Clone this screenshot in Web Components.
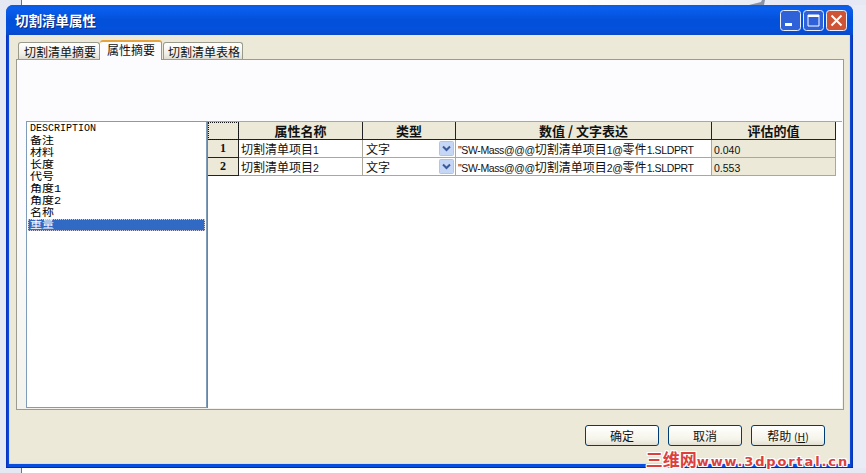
<!DOCTYPE html>
<html>
<head>
<meta charset="utf-8">
<title>切割清单属性</title>
<style>
  html, body { margin: 0; padding: 0; }
  body {
    width: 866px;
    height: 473px;
    overflow: hidden;
    background: #e4e8f2;
    font-family: "Liberation Sans", "Noto Sans CJK SC", sans-serif;
    font-size: 12px;
  }
</style>
</head>
<body>
<desk-top>
  <xp-window title="切割清单属性">
    <xp-tabs>
      <prop-list></prop-list>
      <prop-grid></prop-grid>
    </xp-tabs>
    <xp-button slot="buttons">确定</xp-button>
    <xp-button slot="buttons">取消</xp-button>
    <xp-button slot="buttons">帮助 <span style="font-size:10.5px">(<u>H</u>)</span></xp-button>
  </xp-window>
</desk-top>

<script>
// ascii runs get their own smaller font, the cjk stays at 12px
const latin = (s, cls) => s.replace(/[\x21-\x7e]+/g, m => `<span class="${cls}">${m}</span>`);

class DeskTop extends HTMLElement {
  constructor() {
    super();
    this.attachShadow({mode: 'open'}).innerHTML = `
      <style>
        :host { display: block; position: relative; width: 866px; height: 473px; }
        .back { position: absolute; left: 21px; right: 0; top: 0; bottom: 0;
          background: linear-gradient(90deg, #fff 65%, #e6e9f3 92%); border-left: 1px solid #70737c; }
        .side { position: absolute; right: 0; top: 5px; width: 13px; height: 463px; background: #e9ecf5; }
        .stroke { position: absolute; left: 748px; top: 0; }
        .mark { position: absolute; right: 17px; top: 449px; white-space: nowrap; color: #dc3f3c;
          font: bold 13px/20px "DejaVu Sans", sans-serif; letter-spacing: 1.85px;
          text-shadow: 1px 0 #fff, -1px 0 #fff, 0 1px #fff, 0 -1px #fff, 1px 1px #fff, -1px -1px #fff, 1px -1px #fff, -1px 1px #fff; }
        .mark b { font: bold 17px/20px "Noto Sans CJK SC", sans-serif; letter-spacing: 0; }
        .win { position: relative; padding: 5px 0 0 6px; }
      </style>
      <div class="back"></div>
      <div class="side"></div>
      <svg class="stroke" width="18" height="6" viewBox="0 0 18 6"><path d="M1 5L13 2l1-2h3l-1 5z" fill="#8a93a8"/></svg>
      <div class="win"><slot></slot></div>
      <div class="mark"><b>三维网</b>www.3dportal.cn</div>
    `;
  }
}

class XpWindow extends HTMLElement {
  constructor() {
    super();
    this.attachShadow({mode: 'open'}).innerHTML = `
      <style>
        :host { display: block; width: 847px; height: 463px; }
        .frame { height: 100%; box-sizing: border-box; display: flex; flex-direction: column;
          border-radius: 7px 7px 0 0; overflow: hidden;
          background: linear-gradient(90deg, #0a2fb8, #0a4ee0 3px, #0a4ee0 calc(100% - 3px), #0a2fa8);
          border-bottom: 1px solid #0a2a9c; }
        .bar { height: 30px; flex: none; display: flex; align-items: center; padding: 0 6px 0 9px;
          background: linear-gradient(#0a5be0 0, #0a5fee 12%, #0350da 50%, #0351dc 80%, #0a48c8 100%); }
        .title { flex: 1; color: #fff; font: bold 13.5px "Noto Sans CJK SC", sans-serif;
          text-shadow: 1px 1px #0a2a80; }
        .ctl { display: flex; gap: 2px; }
        .ctl svg { display: block; }
        .body { flex: 1; background: #ece9d8; margin: 0 3px 3px; padding: 5px 5px 0 6px;
          display: flex; flex-direction: column; min-height: 0; border: 1px solid #d8dcec; border-top: 0; }
        .foot { display: flex; justify-content: flex-end; gap: 9px; padding: 15px 19px 0 0; }
      </style>
      <div class="frame">
        <div class="bar">
          <span class="title"></span>
          <div class="ctl">
            <svg width="21" height="21" viewBox="0 0 21 21">
              <rect x=".5" y=".5" width="20" height="20" rx="3" fill="#2f62d8" stroke="#e8eefc"/>
              <rect x="5" y="13" width="7" height="3" fill="#fff"/>
            </svg>
            <svg width="21" height="21" viewBox="0 0 21 21">
              <rect x=".5" y=".5" width="20" height="20" rx="3" fill="#2f62d8" stroke="#e8eefc"/>
              <path d="M5 5h11v11H5z" fill="none" stroke="#fff"/><path d="M5 6h11" stroke="#fff" stroke-width="2"/>
            </svg>
            <svg width="21" height="21" viewBox="0 0 21 21">
              <rect x=".5" y=".5" width="20" height="20" rx="3" fill="#cf5335" stroke="#e8eefc"/>
              <path d="M5.5 5.5l10 10M15.5 5.5l-10 10" stroke="#fff" stroke-width="2"/>
            </svg>
          </div>
        </div>
        <div class="body">
          <slot></slot>
          <div class="foot"><slot name="buttons"></slot></div>
        </div>
      </div>
    `;
  }
  connectedCallback() {
    this.shadowRoot.querySelector('.title').textContent = this.getAttribute('title');
  }
}

class XpTabs extends HTMLElement {
  constructor() {
    super();
    this.attachShadow({mode: 'open'}).innerHTML = `
      <style>
        :host { display: block; font: 12px "Noto Sans CJK SC", sans-serif; }
        .tabs { display: flex; height: 19px; align-items: flex-end; padding-left: 2px; position: relative; z-index: 1; }
        .tab { height: 17px; box-sizing: border-box; padding: 0 3px 0 5px; line-height: 17px; color: #111;
          border: 1px solid #9a9a8c; border-bottom: 0; border-radius: 3px 3px 0 0;
          background: linear-gradient(#fff, #f0efe6 70%, #dfdccf); white-space: nowrap; }
        .tab.on { height: 20px; margin-bottom: -1px; background: #fcfcfe; border-top: 2px solid #e8a33a;
          padding: 0 6px 0 7px; line-height: 16px; border-left: 0; }
        .tab.last { padding: 0 2px 0 4px; margin-left: 1px; }
        .page { height: 351px; box-sizing: border-box; padding: 61px 0 0 9px; border: 1px solid #9c9b91;
          background: linear-gradient(#fcfcfe 40%, #f3f2ec); display: flex; align-items: flex-start; }
        ::slotted(prop-list) { flex: none; }
      </style>
      <div class="tabs">
        <div class="tab">切割清单摘要</div>
        <div class="tab on">属性摘要</div>
        <div class="tab last">切割清单表格</div>
      </div>
      <div class="page"><slot></slot></div>
    `;
  }
}

class PropList extends HTMLElement {
  constructor() {
    super();
    const names = ['备注', '材料', '长度', '代号', '角度1', '角度2', '名称', '重量'];
    const rows = names.map((n, i) =>
      `<div class="row${i == names.length - 1 ? ' sel' : ''}"><span class="wide">${n}</span></div>`).join('');
    this.attachShadow({mode: 'open'}).innerHTML = `
      <style>
        :host { display: block; width: 181px; height: 287px; box-sizing: border-box;
          background: #fff; border: 1px solid #7f9db9; padding: 1px;
          font: 10.5px/12px "Liberation Mono", "Noto Sans CJK SC", monospace; color: #000; }
        .row { height: 12px; padding-left: 2px; white-space: nowrap; }
        .first { font-size: 10px; }
        /* 12px pitch with 12px wide glyphs, so the cjk is widened rather than enlarged */
        .wide { display: inline-block; transform: scaleX(1.14); transform-origin: left center; }
        .sel { background: #316ac5; color: #fff; outline: 1px dotted #ccd; outline-offset: -1px; }
      </style>
      <div class="row first">DESCRIPTION</div>
      ${rows}
    `;
  }
}

class PropGrid extends HTMLElement {
  constructor() {
    super();
    const combo = `<svg width="15" height="15" viewBox="0 0 15 15">
      <rect x=".5" y=".5" width="14" height="14" rx="1" fill="#c6d6f5" stroke="#b0c4ee"/>
      <path d="M4 5.5l3.5 3.5 3.5-3.5" fill="none" stroke="#3a5a9c" stroke-width="2"/></svg>`;
    const row = (n, name, ref, val) => `
      <div class="rh">${n}</div>
      <div class="c">${latin(name, 'l')}</div>
      <div class="c combo"><span>文字</span>${combo}</div>
      <div class="c">${latin(ref, 'l')}</div>
      <div class="c ro">${latin(val, 'l')}</div>`;
    this.attachShadow({mode: 'open'}).innerHTML = `
      <style>
        :host { display: block; width: 635px; height: 287px; box-sizing: border-box;
          background: #fff; border-left: 1px solid #808080; border-top: 1px solid #a8a8a0;
          font: 12px/17px "Noto Sans CJK SC", sans-serif; color: #111; }
        .grid { display: grid; grid-template-columns: 31px 124px 93px 256px 124px; grid-auto-rows: 18px; width: 628px; }
        .h, .rh, .corner { background: #ece9d8; border-right: 1px solid #222; border-bottom: 1px solid #222;
          box-sizing: border-box; text-align: center; font-weight: bold; font-size: 13px; }
        .corner { outline: 1px dotted #111; outline-offset: -1px; }
        .rh { font: bold 12px/17px "Liberation Serif", serif; }
        .c { box-sizing: border-box; border-right: 1px solid #aca899; border-bottom: 1px solid #aca899;
          padding-left: 2px; white-space: nowrap; overflow: hidden; background: #fff; }
        .l { font: 10.5px/17px "Liberation Sans", sans-serif; letter-spacing: -.38px; }
        .ro { background: #ece9d8; }
        .ro .l { letter-spacing: 0; }
        .combo { display: flex; justify-content: space-between; align-items: center; padding: 0 0 0 3px; }
        .combo svg { margin-right: 1px; flex: none; }
      </style>
      <div class="grid">
        <div class="corner"></div>
        <div class="h">属性名称</div>
        <div class="h">类型</div>
        <div class="h">数值 / 文字表达</div>
        <div class="h">评估的值</div>
        ${row(1, '切割清单项目1', '"SW-Mass@@@切割清单项目1@零件1.SLDPRT', '0.040')}
        ${row(2, '切割清单项目2', '"SW-Mass@@@切割清单项目2@零件1.SLDPRT', '0.553')}
      </div>
    `;
  }
}

class XpButton extends HTMLElement {
  constructor() {
    super();
    this.attachShadow({mode: 'open'}).innerHTML = `
      <style>
        :host { display: block; width: 74px; height: 21px; box-sizing: border-box;
          border: 1px solid #003c74; border-radius: 3px; text-align: center;
          background: linear-gradient(#fff, #f5f4ea 70%, #e3e0d2);
          font: 12px/19px "Noto Sans CJK SC", sans-serif; color: #111; }
      </style>
      <slot></slot>
    `;
  }
}

customElements.define('desk-top', DeskTop);
customElements.define('xp-window', XpWindow);
customElements.define('xp-tabs', XpTabs);
customElements.define('prop-list', PropList);
customElements.define('prop-grid', PropGrid);
customElements.define('xp-button', XpButton);
</script>
</body>
</html>
